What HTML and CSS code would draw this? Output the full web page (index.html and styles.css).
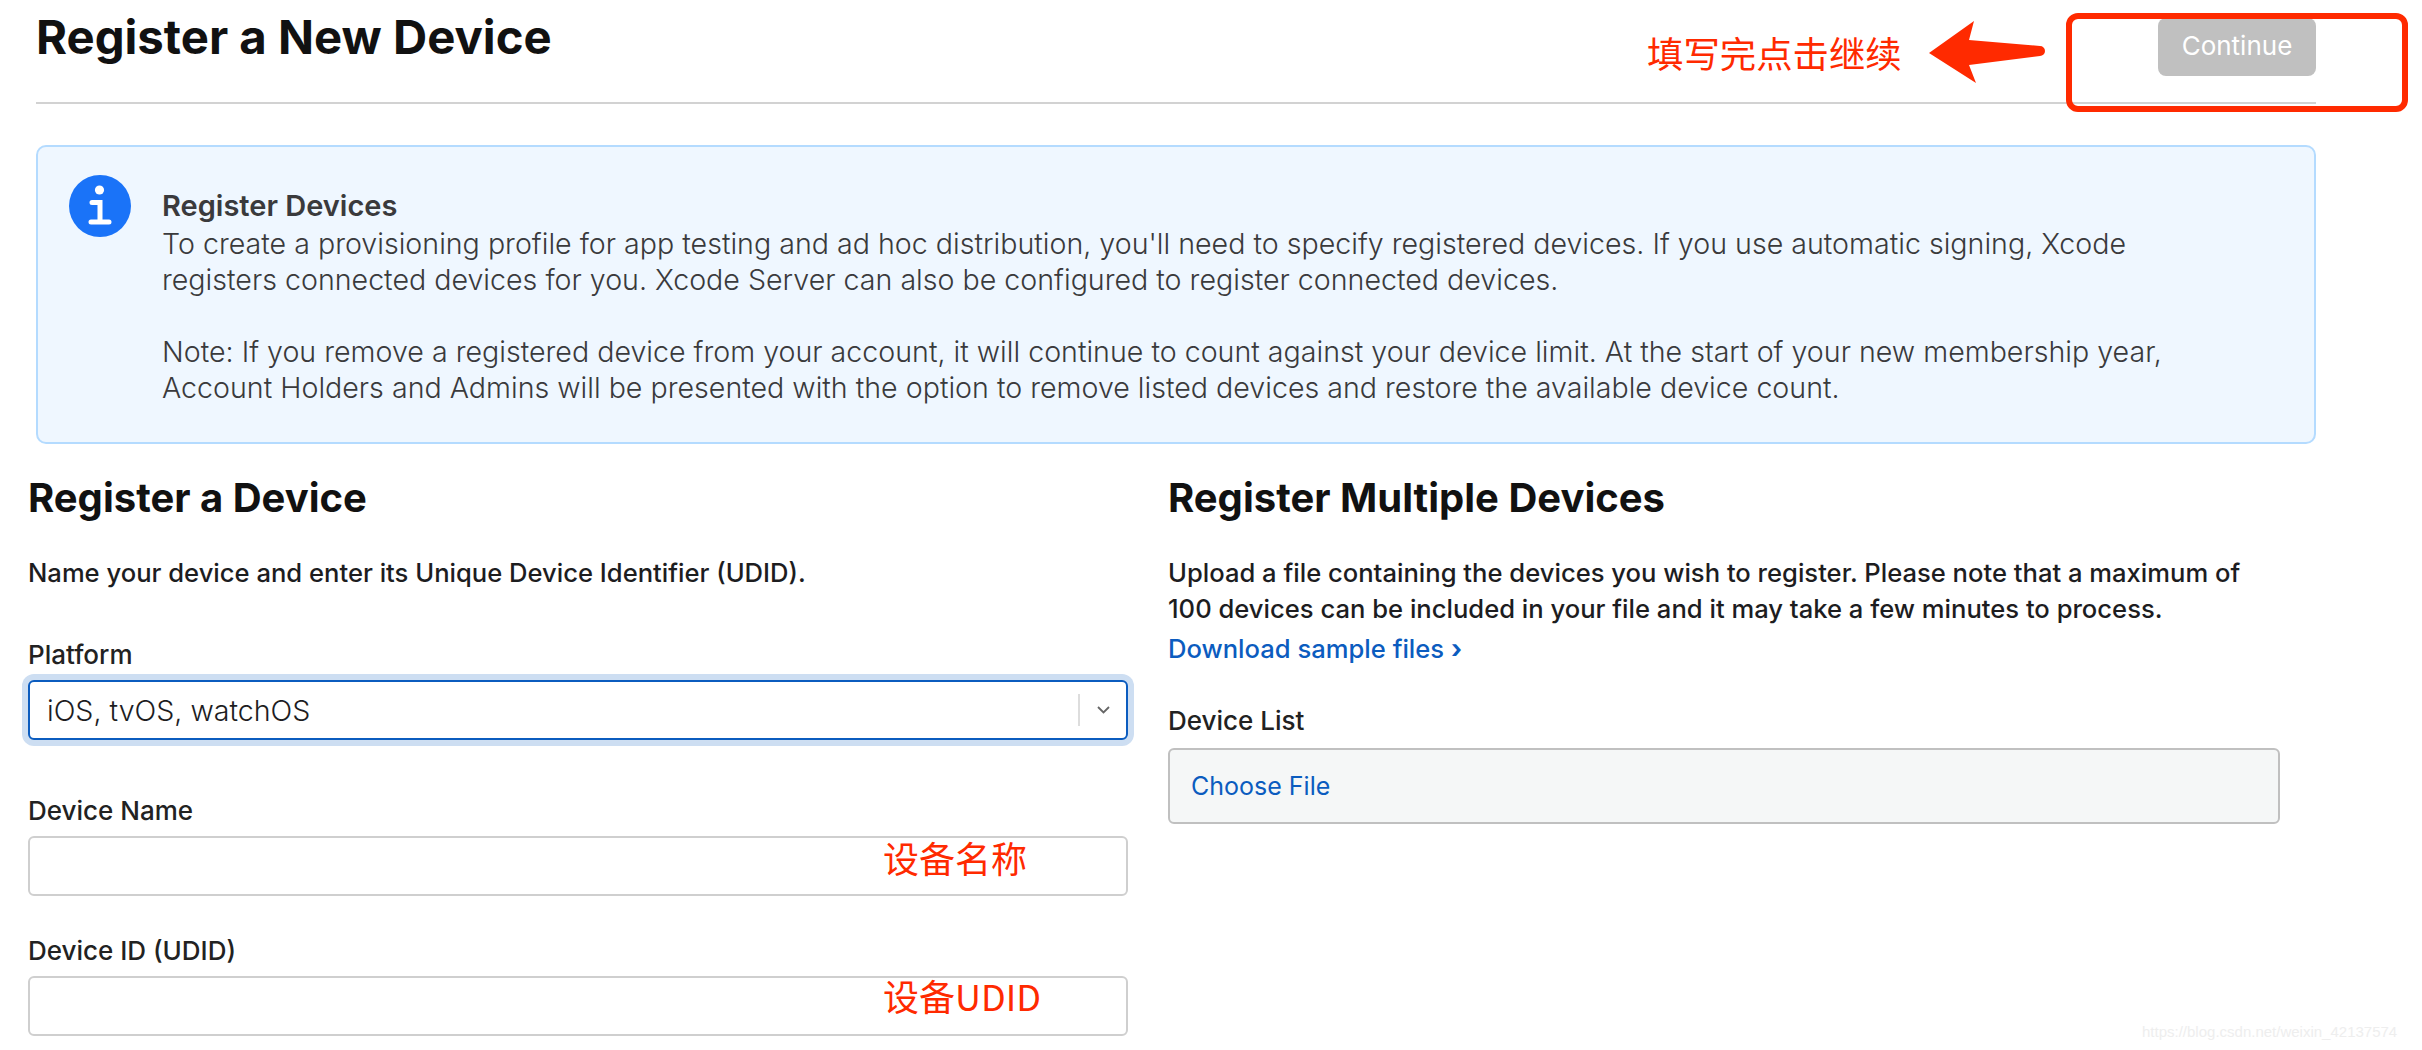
FILE: index.html
```html
<!DOCTYPE html>
<html lang="en">
<head>
    <meta charset="UTF-8">
    <title>Register a New Device</title>
    <link rel="stylesheet" href="styles.css">
</head>
<body>
    <div class="page">
        <header class="page-header">
            <h1 class="page-title">Register a New Device</h1>
            <button class="continue-button" disabled>Continue</button>
        </header>

        <section class="info-box">
            <svg class="info-icon" viewBox="0 0 62 62">
                <circle cx="31" cy="31" r="31" fill="#1a73f8"/>
                <circle cx="30.5" cy="15" r="4.6" fill="#fff"/>
                <path d="M23 25h10.500v19.500h6.500a2.500 2.500 0 0 1 0 5h-18a2.500 2.500 0 0 1 0-5h6.500v-14.500h-5.500a2.500 2.500 0 0 1 0-5z" fill="#fff"/>
            </svg>
            <div class="info-text">
                <h2 class="info-title">Register Devices</h2>
                <p>To create a provisioning profile for app testing and ad hoc distribution, you'll need to specify registered devices. If you use automatic signing, Xcode registers connected devices for you. Xcode Server can also be configured to register connected devices.</p>
                <p class="info-note">Note: If you remove a registered device from your account, it will continue to count against your device limit. At the start of your new membership year, Account Holders and Admins will be presented with the option to remove listed devices and restore the available device count.</p>
            </div>
        </section>

        <div class="columns">
            <section class="column-left">
                <h2 class="section-title">Register a Device</h2>
                <p class="section-text">Name your device and enter its Unique Device Identifier (UDID).</p>

                <label class="field-label">Platform</label>
                <div class="select-box">
                    <span class="select-value">iOS, tvOS, watchOS</span>
                    <span class="select-arrow">
                        <svg width="13" height="8" viewBox="0 0 13 8"><path d="M1 1l5.500 5.500L12 1" fill="none" stroke="#666" stroke-width="1.800"/></svg>
                    </span>
                </div>

                <label class="field-label name-label">Device Name</label>
                <input class="text-input" type="text">

                <label class="field-label id-label">Device ID (UDID)</label>
                <input class="text-input" type="text">
            </section>

            <section class="column-right">
                <h2 class="section-title">Register Multiple Devices</h2>
                <p class="section-text">Upload a file containing the devices you wish to register. Please note that a maximum of 100 devices can be included in your file and it may take a few minutes to process.</p>
                <a href="#" class="sample-link">Download sample files <span class="link-arrow">›</span></a>

                <label class="field-label list-label">Device List</label>
                <div class="file-box"><a href="#" class="file-link">Choose File</a></div>
            </section>
        </div>

        <!-- red notes drawn over the screenshot -->
        <div class="mark-box"></div>
        <svg class="mark-arrow" width="120" height="66" viewBox="0 0 120 66">
            <path d="M1 33L46 1l-5 19 71 6a5 5 0 0 1 0 10l-71 9 7 18z" fill="#ff2a00"/>
        </svg>
        <div class="note note-continue">填写完点击继续</div>
        <div class="note note-name">设备名称</div>
        <div class="note note-udid">设备UDID</div>
        <div class="watermark">https://blog.csdn.net/weixin_42137574</div>
    </div>
</body>
</html>
```

FILE: styles.css
```css
* {
    margin: 0;
    padding: 0;
    box-sizing: border-box;
    font-family: 'Inter', 'Noto Sans CJK SC', sans-serif;
}

body {
    background-color: #fff;
    color: #1d1d1f;
}

.page {
    position: relative;
    width: 2422px;
    height: 1050px;
    overflow: hidden;
}

.page-header {
    display: flex;
    justify-content: space-between;
    align-items: flex-start;
    height: 104px;
    margin-left: 36px;
    width: 2280px;
    padding-top: 18px;
    border-bottom: 2px solid #d2d2d2;
}

.page-title {
    font-size: 47.3px;
    font-weight: 700;
    line-height: 38px;
    color: #111;
}

.continue-button {
    width: 158px;
    height: 58px;
    padding-bottom: 4px;
    border: none;
    border-radius: 8px;
    background-color: #c0c0c0;
    color: #fff;
    font-size: 26px;
}

.info-box {
    display: flex;
    width: 2280px;
    height: 299px;
    margin: 41px 0 0 36px;
    padding: 28px 31px;
    background-color: #eff7ff;
    border: 2px solid #b4dbff;
    border-radius: 10px;
}

.info-icon {
    width: 62px;
    height: 62px;
    flex-shrink: 0;
}

.info-text {
    width: 2010px;
    margin-left: 31px;
    padding-top: 11px;
    font-size: 28.6px;
    line-height: 36px;
    font-weight: 300;
    color: #3a3a3c;
}

.info-title {
    font-size: 29px;
    font-weight: 600;
    line-height: 40px;
}

.info-note {
    margin-top: 36px;
}

.columns {
    display: flex;
    padding: 28px 0 0 28px;
}

.column-left {
    width: 1100px;
}

.column-right {
    width: 1112px;
    margin-left: 40px;
}

.section-title {
    font-size: 40px;
    font-weight: 700;
    line-height: 52px;
    color: #111;
}

.section-text {
    margin-top: 31px;
    font-size: 25.6px;
    font-weight: 450;
    line-height: 36px;
    color: #1d1d1f;
}

.field-label {
    display: block;
    font-size: 26px;
    font-weight: 450;
    line-height: 32px;
    color: #222;
}

.column-left .field-label {
    margin-top: 48px;
    margin-bottom: 9px;
}

.column-left .name-label {
    margin-top: 55px;
}

.column-left .id-label {
    margin-top: 39px;
}

.select-box {
    display: flex;
    justify-content: space-between;
    align-items: center;
    height: 60px;
    padding-left: 17px;
    background-color: #fff;
    border: 2px solid #0b5cbf;
    border-radius: 6px;
    box-shadow: 0 0 0 6px #cddef2;
}

.select-value {
    font-size: 28.6px;
    font-weight: 350;
    color: #1d1d1f;
}

.select-arrow {
    display: flex;
    justify-content: center;
    align-items: center;
    width: 48px;
    height: 32px;
    border-left: 2px solid #ddd;
}

.text-input {
    display: block;
    width: 100%;
    height: 60px;
    background-color: #fff;
    border: 2px solid #cfcfcf;
    border-radius: 6px;
}

.sample-link {
    display: block;
    margin-top: 4px;
    font-size: 25.6px;
    font-weight: 450;
    line-height: 36px;
    color: #0b5cbf;
    text-decoration: none;
}

.link-arrow {
    font-weight: 700;
}

.list-label {
    margin-top: 38px;
    margin-bottom: 11px;
}

.file-box {
    display: flex;
    align-items: center;
    height: 76px;
    padding-left: 21px;
    background-color: #f5f7f7;
    border: 2px solid #c0c0c0;
    border-radius: 6px;
}

.file-link {
    font-size: 25px;
    color: #0b5cbf;
    text-decoration: none;
}

.mark-box {
    position: absolute;
    left: 2066px;
    top: 13px;
    width: 342px;
    height: 99px;
    border: 6px solid #ff2a00;
    border-radius: 12px;
}

.mark-arrow {
    position: absolute;
    left: 1928px;
    top: 20px;
}

.note {
    position: absolute;
    font-size: 36px;
    line-height: 44px;
    color: #ff2a00;
    font-family: 'Noto Sans CJK SC', sans-serif;
}

.note-continue {
    left: 1647px;
    top: 30px;
    font-size: 36.4px;
}

.note-name {
    left: 883px;
    top: 835px;
}

.note-udid {
    left: 883px;
    top: 973px;
}

.watermark {
    position: absolute;
    left: 2142px;
    top: 1021px;
    font-family: 'Liberation Sans', sans-serif;
    font-size: 15px;
    line-height: 22px;
    color: #eee;
}
```
